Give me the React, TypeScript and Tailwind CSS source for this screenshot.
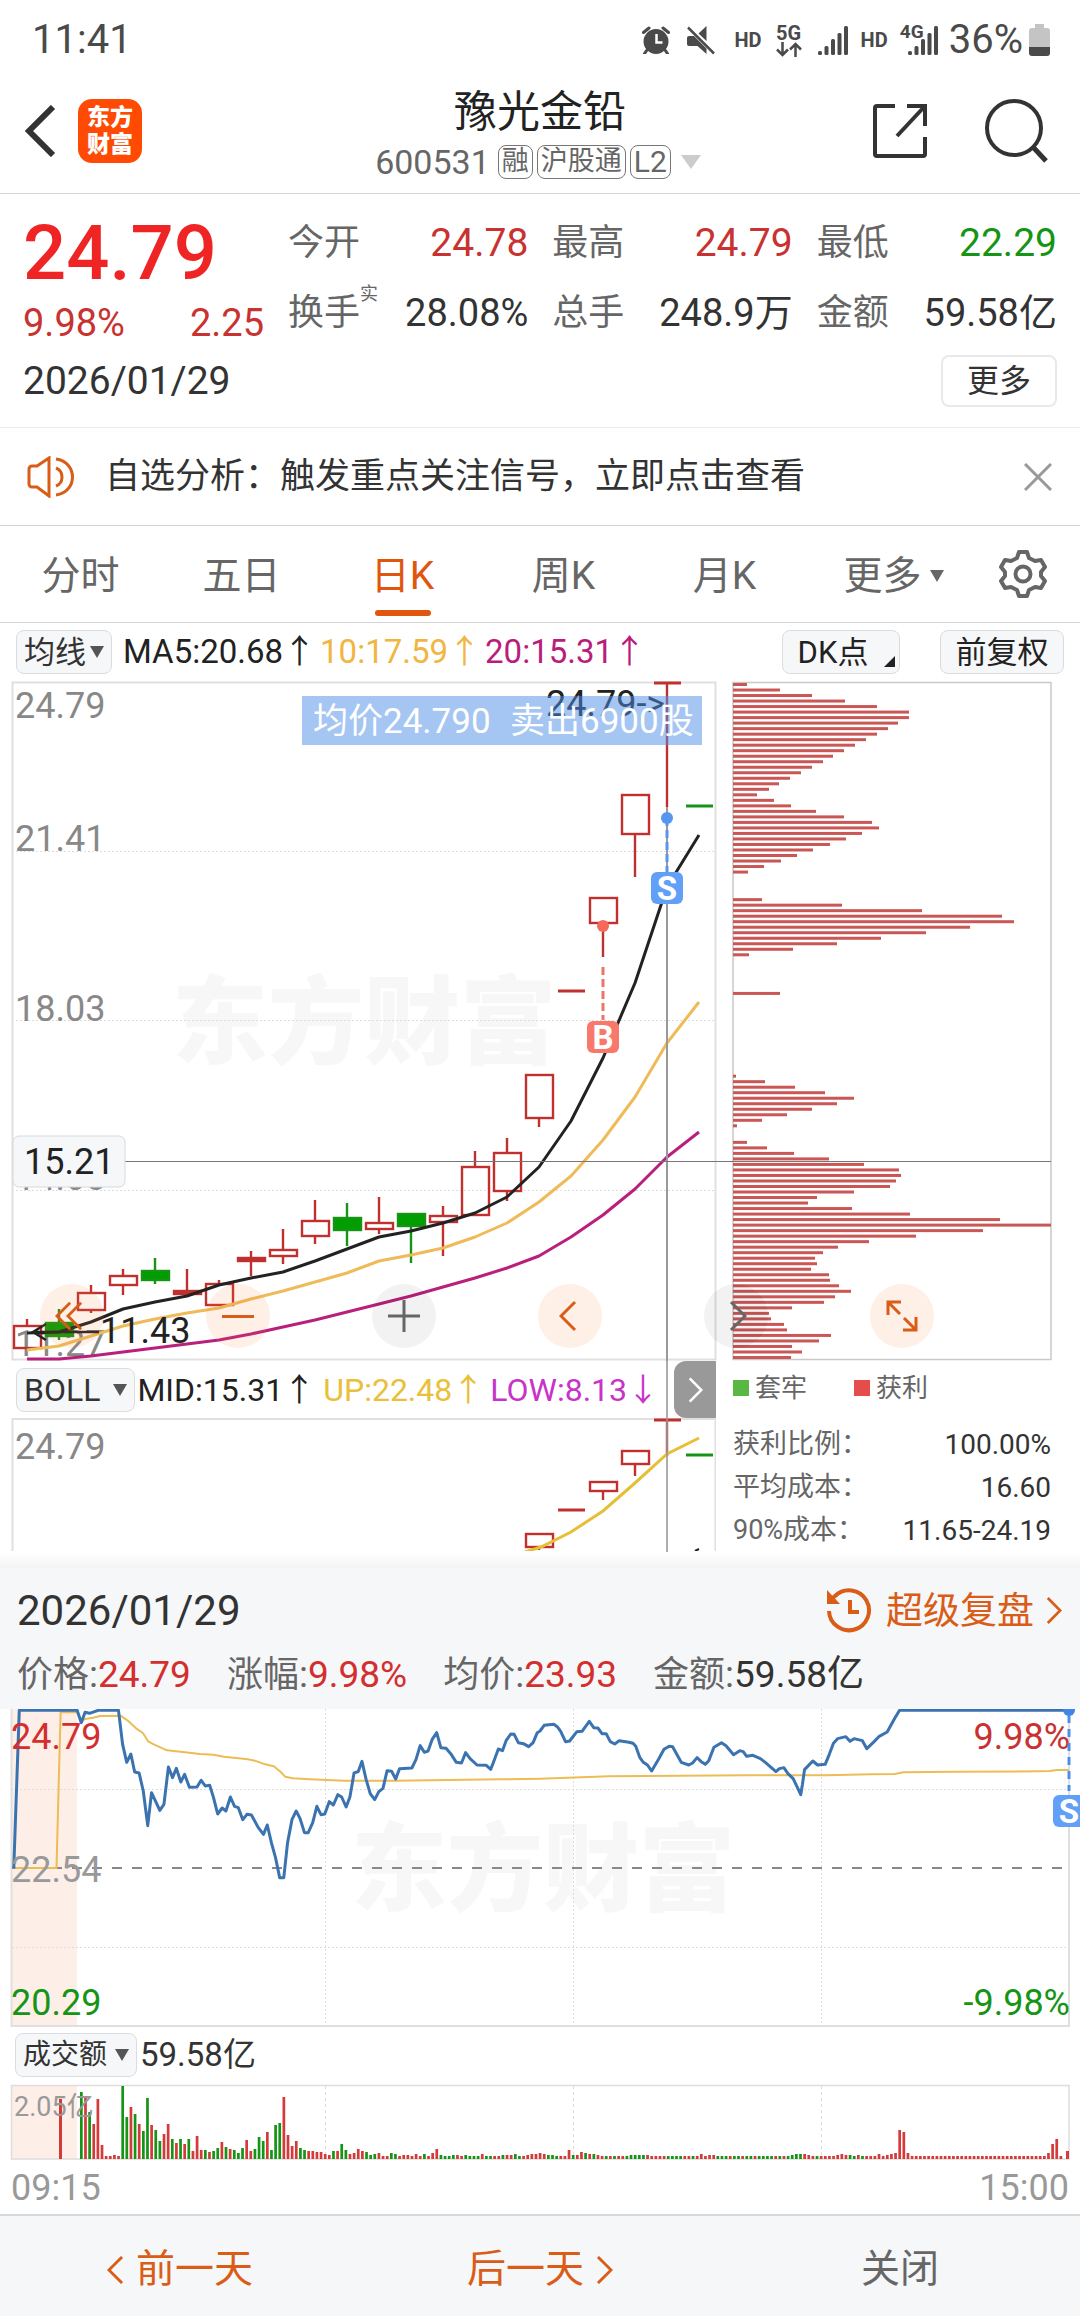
import React from "react";

const RED = "#c0302e";
const GREEN = "#159415";
const ORANGE = "#d95c17";

type Candle = { x: number; top: number; bottom: number; high: number; low: number; up: boolean };

const c = (x: number, top: number, bottom: number, high: number, low: number, up = true): Candle => ({
  x, top, bottom, high, low, up,
});

const candles: Candle[] = [
  c(27, 1326, 1348, 1319, 1348),
  c(59, 1323, 1336, 1309, 1340, false),
  c(91, 1293, 1310, 1285, 1313),
  c(123, 1276, 1285, 1269, 1295),
  c(155, 1271, 1280, 1258, 1284, false),
  c(187, 1291, 1294, 1269, 1294),
  c(219, 1284, 1305, 1280, 1305),
  c(251, 1258, 1261, 1251, 1276),
  c(283, 1250, 1256, 1229, 1264),
  c(315, 1221, 1236, 1200, 1244),
  c(347, 1218, 1230, 1203, 1246, false),
  c(379, 1223, 1229, 1197, 1234),
  c(411, 1214, 1226, 1214, 1263, false),
  c(443, 1216, 1222, 1206, 1256),
  c(475, 1167, 1215, 1151, 1215),
  c(507, 1153, 1191, 1138, 1201),
  c(539, 1075, 1118, 1075, 1127),
  c(571, 991, 991, 991, 991),
  c(603, 898, 923, 898, 957),
  c(635, 795, 834, 795, 877),
  c(667, 683, 683, 683, 807),
  c(699, 806, 806, 806, 806, false),
];

const subCandles: Candle[] = [
  c(539, 1534, 1547, 1534, 1550),
  c(571, 1510, 1510, 1510, 1510),
  c(603, 1482, 1491, 1482, 1500),
  c(635, 1451, 1464, 1451, 1476),
  c(667, 1420, 1420, 1420, 1456),
  c(699, 1455, 1455, 1455, 1455, false),
];

const line = (ys: number[]) => ys.map((y, i) => `${27 + i * 32},${y}`).join(" ");

const ma5 = line([1333, 1332, 1322, 1309, 1302, 1296, 1285, 1278, 1272, 1261, 1249, 1237, 1231, 1223, 1213, 1197, 1167, 1121, 1058, 983, 887, 835]);
const ma10 = line([1350, 1346, 1336, 1326, 1319, 1313, 1308, 1299, 1291, 1282, 1273, 1261, 1255, 1248, 1237, 1223, 1202, 1176, 1140, 1097, 1043, 1002]);
const ma20 = line([1359, 1359, 1356, 1352, 1348, 1344, 1340, 1334, 1327, 1320, 1312, 1304, 1296, 1287, 1278, 1268, 1256, 1237, 1215, 1189, 1157, 1132]);

/* Runs of the cost distribution: first row of the run, then one length per price step. */
const costRuns: [number, number[]][] = [
  [0, [14, 47, 79, 112, 144, 176, 176, 165, 155, 144, 133, 122, 111, 100, 90, 79, 68, 57, 46, 36, 24, 41, 58, 83, 111, 139, 146, 129, 113, 97, 80, 64, 48, 31, 15]],
  [39, [29, 109, 189, 269, 281, 237, 193, 148, 104, 60, 16]],
  [56, [47]],
  [71, [3, 32, 62, 92, 121, 104, 79, 54, 29, 4]],
  [83, [14, 34, 61, 96, 131, 166, 168, 163, 157, 121, 84, 75, 119, 177, 267, 318, 250, 183, 136, 105, 90, 82, 84, 78, 96, 97, 106, 118, 102, 91, 59, 36, 38, 51, 54, 98, 86, 59, 69, 58]],
];

const pricePath =
  "40,531 56,58 224,58 236,95 247,64 260,67 285,58 344,58 356,160 368,214 380,189 391,243 404,246 416,300 429,404 440,305 464,358 476,340 489,228 501,260 512,232 525,273 536,250 550,289 572,288 584,268 596,285 609,283 620,320 632,369 645,351 656,360 669,318 681,346 692,350 705,386 717,370 730,372 750,410 765,430 776,402 788,455 800,500 812,560 824,560 835,455 848,385 860,360 871,382 884,425 895,425 908,395 920,346 932,371 943,369 956,332 968,342 981,311 992,318 1005,348 1016,318 1028,246 1040,242 1051,211 1063,265 1075,308 1088,326 1100,302 1112,292 1124,239 1137,241 1149,264 1160,233 1196,231 1208,205 1220,164 1232,184 1243,180 1255,145 1268,125 1280,170 1295,172 1310,190 1325,214 1340,216 1352,185 1365,203 1385,222 1412,223 1425,235 1435,208 1447,174 1459,179 1470,148 1483,129 1493,130 1505,155 1520,158 1535,167 1548,155 1560,125 1568,120 1580,103 1608,100 1618,107 1628,121 1642,152 1654,150 1675,122 1690,121 1711,91 1724,110 1736,111 1748,128 1760,128 1772,152 1785,159 1798,149 1826,154 1838,157 1846,166 1858,200 1868,214 1880,222 1892,240 1913,203 1928,175 1943,166 1953,167 1978,214 2000,222 2011,216 2024,200 2036,212 2048,220 2058,209 2073,169 2095,155 2108,164 2130,191 2148,179 2158,182 2168,196 2186,193 2208,203 2223,215 2253,242 2263,233 2276,230 2288,248 2303,263 2318,295 2325,311 2330,280 2336,236 2360,210 2374,222 2396,220 2408,190 2420,157 2432,143 2456,137 2468,151 2480,143 2504,149 2517,173 2538,152 2553,136 2576,123 2598,82 2612,58 3104,58";
const averagePath =
  "45,531 164,531 176,64 224,64 236,90 247,84 270,80 290,75 350,74 370,88 395,112 415,126 430,151 448,161 485,178 550,185 580,189 620,191 650,197 720,205 740,209 770,220 795,226 812,240 828,257 850,262 900,265 1000,269 1150,269 1350,266 1450,265 1568,263 1768,256 1968,254 2168,253 2398,253 2528,250 2598,249 2623,244 2768,242 3008,241 3048,240 3068,237 3104,237";

/* One letter and height per minute: r = rise, g = fall. */
const volumeHead =
  "g67 r62 g47 r35 r60 r14 r3 r3 r4 r3 g73 g42 r52 g45 r35 g28 g61 r34 g29 g18 r25 r35 g20 r16 g20 r15 g20 r8 r23 r9 g9 r7 g8 g11 r17 g12 r10 g9 g6 g11 r19 r8 g10 g22 g18 r27 g9 g34 g36 r62 r24 r13 r18 g11 g9 r8 r8 r7 r7 r5 r4 g8 r8 g15 g9 r5 r6 r10 r8 g7 g4 g5 r6 r3 r3 g6 g5 r3 r4 r4 r3 r5 r3 g5 r3 r6 r10 g4 g3 g3 g4 r4 r3 g4 g3 g3 g3 r5 g3 g3 r3 r3 g4 r4 r4 g5 g3 r3 r4 r5 r5 r6 r5 g4 g4 g3 r3 r3 r9 g4 r4 r7 g6 r5 g5 r4 r3 g3 r3 g3 r3 r3 g3 g4 g4 g4 g4 r4 r3 r3 r3 r3 g3 g3 g3 g3 r3 r3 g3 r3 r5 r3 r4 r4 g3 g3 g3 r3 g3 g3 r3 g3 g3 r3 g3 g3 g3 g3 r3 g3 r3 g3 g4 g5 g5 r5 r4 r3 g3 r3 r3 r3 r3 r4 r5 r4 g4 g3 r4 g3 r3 r3 r3 r5 r3 r4 r5 r6 r29 r27 r6".split(" ");
const volumeTail = [...Array(33).fill("r3"), "r6", "r15", "r20", "r3"] as string[];
const volumes = [...volumeHead, ...volumeTail];

function Candles({ items }: { items: Candle[] }) {
  return (
    <g strokeWidth={2.4}>
      {items.map((k) => {
        const color = k.up ? RED : GREEN;
        const flat = k.bottom - k.top < 1;
        const filled = !k.up || k.bottom - k.top < 5;
        return (
          <g key={k.x} stroke={color} fill={filled ? (k.up ? RED : "#009e00") : "none"}>
            <line x1={k.x} x2={k.x} y1={k.high} y2={k.top} />
            <line x1={k.x} x2={k.x} y1={k.bottom} y2={k.low} />
            {flat ? (
              <line x1={k.x - 13} x2={k.x + 14} y1={k.top} y2={k.top} strokeWidth={3} />
            ) : (
              <rect x={k.x - 13} y={k.top} width={27} height={k.bottom - k.top} />
            )}
          </g>
        );
      })}
    </g>
  );
}

function Badge({ x, y, letter, color }: { x: number; y: number; letter: string; color: string }) {
  return (
    <g>
      <rect x={x - 16} y={y} width={32} height={32} rx={6} fill={color} />
      <text x={x} y={y + 28} textAnchor="middle" fontSize={33} fontWeight={700} fill="#fff">{letter}</text>
    </g>
  );
}

function Chevron({ dir, className }: { dir: "left" | "right"; className: string }) {
  return (
    <svg viewBox="0 0 18 30" className={className} fill="none" stroke="currentColor" strokeWidth={3}>
      <path d={dir === "left" ? "M16 1 2 15l14 14" : "M2 1l14 14L2 29"} />
    </svg>
  );
}

function Signal() {
  return (
    <svg viewBox="0 0 30 29" className="h-[29px] w-[30px]" fill="#4a4a4a">
      <rect x="0" y="25" width="4" height="4" rx="1.5" />
      <rect x="6.5" y="20" width="4" height="9" rx="1.5" />
      <rect x="13" y="13" width="4" height="16" rx="1.5" />
      <rect x="19.5" y="7" width="4" height="22" rx="1.5" />
      <rect x="26" y="0" width="4" height="29" rx="1.5" />
    </svg>
  );
}

function StatusBar() {
  return (
    <div className="flex h-[78px] items-center justify-between pl-8 pr-[30px] pt-0.5 text-[#4a4a4a]">
      <span className="text-[40px] leading-none">11:41</span>
      <div className="flex items-center">
        <svg viewBox="0 0 28 28" className="mr-4 size-7" fill="none" stroke="#4a4a4a">
          <circle cx="14" cy="15.5" r="12.5" fill="#4a4a4a" stroke="none" />
          <path d="M1.5 6.5 7 2M26.5 6.5 21 2M5 24l-2.5 3.5M23 24l2.5 3.5" strokeWidth="3" strokeLinecap="round" />
          <path d="M14.5 8v8.5h6" stroke="#fff" strokeWidth="2.5" />
        </svg>
        <svg viewBox="0 0 30 29" className="mr-[18px] h-[29px] w-[30px]" fill="#4a4a4a">
          <path d="M1 12a2 2 0 0 1 2-2h5l12.5 12.5V28l-9-8H3a2 2 0 0 1-2-2zM12.5 7.5 20.5 0v15z" />
          <path d="M2 1.5 28 27.5" stroke="#4a4a4a" strokeWidth="2.5" />
        </svg>
        <span className="mr-[14px] text-[20px] font-bold leading-none">HD</span>
        <span className="mr-4 flex flex-col items-center">
          <span className="text-[20px] font-bold leading-[18px]">5G</span>
          <svg viewBox="0 0 26 15" className="h-[15px] w-[26px]" fill="none" stroke="#4a4a4a" strokeWidth="2.5">
            <path d="M6.5 0v13M1 7.5l5.5 5.5L12 7.5M19.5 15V2M14 7.5 19.5 2 25 7.5" />
          </svg>
        </span>
        <Signal />
        <span className="ml-[13px] mr-3 text-[20px] font-bold leading-none">HD</span>
        <span className="relative pl-2">
          <Signal />
          <span className="absolute -top-1 left-0 text-[19px] font-bold leading-none">4G</span>
        </span>
        <span className="ml-[11px] mr-[6px] text-[40px] leading-none">36%</span>
        <svg viewBox="0 0 21 32" className="h-8 w-[21px]">
          <path d="M6 0h9v4h3a3 3 0 0 1 3 3v17H0V7a3 3 0 0 1 3-3h3z" fill="#c4c4c4" />
          <path d="M0 23h21v6a3 3 0 0 1-3 3H3a3 3 0 0 1-3-3z" fill="#4a4a4a" />
        </svg>
      </div>
    </div>
  );
}

function Tag({ children }: { children: React.ReactNode }) {
  return (
    <span className="flex h-[34px] items-center rounded-lg border border-[#777] px-[3px] text-[27px] leading-none">{children}</span>
  );
}

function Header() {
  return (
    <header className="grid h-[116px] grid-cols-[1fr_auto_1fr] items-center border-b border-[#d4d4d4] pb-2.5">
      <div className="flex items-center gap-[22px] pl-[25px]">
        <button aria-label="返回">
          <svg viewBox="0 0 31 52" className="h-[52px] w-[31px]" fill="none" stroke="#333" strokeWidth="6">
            <path d="M28 2 4 26l24 24" />
          </svg>
        </button>
        <span className="flex size-16 flex-col items-center justify-center rounded-[14px] bg-[#fe4a03] text-[23px] font-black leading-[27px] text-white">
          <span>东方</span>
          <span>财富</span>
        </span>
      </div>
      <div className="flex flex-col items-center pt-1 text-[#666]">
        <h1 className="text-[43px] leading-[50px] text-[#222]">豫光金铅</h1>
        <button className="mt-2 flex items-center gap-1 pr-1">
          <span className="mr-1 text-[34px] leading-none">600531</span>
          <Tag>融</Tag>
          <Tag>沪股通</Tag>
          <Tag><span className="text-[30px]">L2</span></Tag>
          <svg viewBox="0 0 20 14" className="ml-1.5 h-[14px] w-5" fill="#ccc"><path d="M0 0h20L10 14z" /></svg>
        </button>
      </div>
      <div className="flex items-center justify-end gap-[57px] pr-[31px]">
        <button aria-label="分享">
          <svg viewBox="0 0 56 56" className="size-14" fill="none" stroke="#333" strokeWidth="4">
            <path d="M23 3H5a2 2 0 0 0-2 2v46a2 2 0 0 0 2 2h46a2 2 0 0 0 2-2V34M35 3h18v20M53 3 25 33" />
          </svg>
        </button>
        <button aria-label="搜索">
          <svg viewBox="0 0 64 64" className="size-16" fill="none" stroke="#333" strokeWidth="4">
            <circle cx="29" cy="29" r="27" />
            <path d="M48 48 61 62" strokeWidth="5" />
          </svg>
        </button>
      </div>
    </header>
  );
}

const quotes: [string, string, string, string, string, string][] = [
  ["今开", "24.78", "text-[#c83230]", "换手", "28.08%", "实"],
  ["最高", "24.79", "text-[#c83230]", "总手", "248.9万", ""],
  ["最低", "22.29", "text-[#159415]", "金额", "59.58亿", ""],
];

function Quote() {
  return (
    <section className="border-b border-[#ebebeb] px-[23px] pb-5 pt-[14px] text-[39px]">
      <div className="grid grid-cols-[241px_1fr_1fr_1fr] gap-6">
        <div className="pt-1 text-[#c83230]">
          <div className="text-[76px] font-medium leading-[82px] text-[#ef2424]">24.79</div>
          <div className="flex justify-between text-[38px] leading-[58px]">
            <span>9.98%</span>
            <span>2.25</span>
          </div>
        </div>
        {quotes.map(([a, av, color, b, bv, sup]) => (
          <dl key={a} className="leading-[70px] text-[#333]">
            <div className="flex h-[70px] justify-between">
              <dt className="text-[36px] text-[#666]">{a}</dt>
              <dd className={color}>{av}</dd>
            </div>
            <div className="flex h-[70px] justify-between">
              <dt className="relative text-[36px] text-[#666]">
                {b}
                {sup && <span className="absolute left-full top-1.5 text-[18px] leading-5">{sup}</span>}
              </dt>
              <dd className="text-[38px]">{bv}</dd>
            </div>
          </dl>
        ))}
      </div>
      <div className="mt-[3px] flex items-center justify-between text-[#333]">
        <span className="leading-[52px]">2026/01/29</span>
        <button className="h-[52px] rounded-lg border-2 border-[#e8e9ec] px-6 text-[32px] leading-none">更多</button>
      </div>
    </section>
  );
}

function Notice() {
  return (
    <div className="flex h-[98px] items-center border-b border-[#d4d4d4] pl-[27px] pr-7 text-[35px] text-[#333]">
      <svg viewBox="0 0 48 42" className="mr-[30px] h-[42px] w-12" fill="none" stroke={ORANGE} strokeWidth="3">
        <path d="M22 2 10 10H5a3 3 0 0 0-3 3v15a3 3 0 0 0 3 3h5l12 9zM29 3c22 3 22 33 0 36M29 12c8 3 8 15 0 18" />
      </svg>
      <span className="flex-1 pt-0.5">自选分析：触发重点关注信号，立即点击查看</span>
      <button aria-label="关闭提示">
        <svg viewBox="0 0 28 28" className="size-7" stroke="#999" strokeWidth="3"><path d="M1 1l26 26M27 1 1 27" /></svg>
      </button>
    </div>
  );
}

function Tabs() {
  return (
    <nav className="grid h-[97px] grid-cols-[repeat(6,161fr)_114fr] border-b border-[#d4d4d4] text-[39px] text-[#666]">
      {["分时", "五日", "日K", "周K", "月K"].map((t) => (
        <button key={t} className={t === "日K" ? "relative pt-1 text-[#e0560f]" : "relative pt-1"}>
          {t}
          {t === "日K" && <span className="absolute bottom-1.5 left-1/2 h-1.5 w-14 -translate-x-1/2 rounded-full bg-[#e0560f]" />}
        </button>
      ))}
      <button className="flex items-center justify-center gap-2 pl-4 pt-1">
        更多
        <svg viewBox="0 0 14 12" className="h-3 w-[14px]" fill="#666"><path d="M0 0h14L7 12z" /></svg>
      </button>
      <button aria-label="设置" className="flex items-center justify-center">
        <svg viewBox="0 0 48 48" className="size-12" fill="none" stroke="#666" strokeWidth="4" strokeLinejoin="round">
          <path d="M20 2h8l2 6 6 3 6-1 4 7-4 5v4l4 5-4 7-6-1-6 3-2 6h-8l-2-6-6-3-6 1-4-7 4-5v-4l-4-5 4-7 6 1 6-3z" />
          <circle cx="24" cy="24" r="7.5" />
        </svg>
      </button>
    </nav>
  );
}

function Drop({ children, className }: { children: React.ReactNode; className: string }) {
  return (
    <button className={`flex h-11 items-center rounded-lg border border-[#d9dde2] bg-[#f6f7f9] leading-none text-[#333] ${className}`}>
      {children}
      <svg viewBox="0 0 14 12" className="h-3 w-[14px]" fill="#555"><path d="M0 0h14L7 12z" /></svg>
    </button>
  );
}

function MaRow() {
  return (
    <div className="flex h-[58px] items-center pl-4 pr-4 text-[33px] text-[#222]">
      <Drop className="gap-1 px-[7px] text-[31px]">均线</Drop>
      <span className="ml-[11px]">MA5:20.68↑</span>
      <span className="ml-1 text-[#f1b541]">10:17.59↑</span>
      <span className="ml-1 flex-1 text-[#ba1c7c]">20:15.31↑</span>
      <button className="relative h-11 w-[118px] rounded-lg border border-[#d9dde2] bg-[#f6f7f9] pr-4 text-[31px] leading-none">
        DK点
        <svg viewBox="0 0 11 11" className="absolute bottom-1.5 right-1 size-[11px]" fill="#222"><path d="M11 0v11H0z" /></svg>
      </button>
      <button className="ml-10 h-11 w-[124px] rounded-lg border border-[#d9dde2] bg-[#f6f7f9] text-[31px] leading-none">前复权</button>
    </div>
  );
}

function KChart() {
  return (
    <div className="relative">
      <svg viewBox="0 681 1080 680" className="block h-auto w-full" fontSize={36}>
        <text x={364} y={1056} textAnchor="middle" fontSize={96} fontWeight={900} fill="#f7f7f7">东方财富</text>
        <g stroke="#ddd" strokeWidth={1} strokeDasharray="2 2">
          <line x1={12} x2={716} y1={851.5} y2={851.5} />
          <line x1={12} x2={716} y1={1020.5} y2={1020.5} />
          <line x1={12} x2={716} y1={1190.5} y2={1190.5} />
        </g>
        <rect x={12.5} y={682.5} width={703} height={677} fill="none" stroke="#e0e0e0" strokeWidth={2} />
        <g fill="#888">
          <text x={15} y={718}>24.79</text>
          <text x={15} y={851}>21.41</text>
          <text x={15} y={1021}>18.03</text>
          <text x={15} y={1190}>14.65</text>
          <text x={15} y={1356}>11.27</text>
        </g>
        <Candles items={candles} />
        <g fill="none" strokeWidth={3} strokeLinejoin="round">
          <polyline points={ma20} stroke="#b8207c" />
          <polyline points={ma10} stroke="#eebb58" />
          <polyline points={ma5} stroke="#222" />
        </g>
        <path d="M46 1324 33 1332l13 8M33 1332h66" fill="none" stroke="#222" strokeWidth={2.5} />
        <text x={100} y={1343} fill="#222">11.43</text>
        <text x={546} y={716} fill="#222">24.79-&gt;</text>
        <rect x={302} y={696} width={400} height={49} fill="#4b8ee5" fillOpacity={0.5} />
        <text x={313} y={733} fontSize={35} fill="#fff">均价24.790</text>
        <text x={510} y={733} fontSize={35} fill="#fff">卖出6900股</text>

        <circle cx={603} cy={926} r={6} fill="#f5695a" />
        <line x1={603} x2={603} y1={967} y2={1020} stroke="#ee7466" strokeWidth={3} strokeDasharray="8 4" />
        <Badge x={603} y={1021} letter="B" color="#f8796b" />
        <line x1={667} x2={667} y1={807} y2={1361} stroke="#999" strokeWidth={2} />
        <circle cx={667} cy={818} r={6} fill="#5796ec" />
        <line x1={667} x2={667} y1={818} y2={872} stroke="#5796ec" strokeWidth={3} strokeDasharray="8 4" />
        <Badge x={667} y={872} letter="S" color="#62a0f8" />

        <rect x={733} y={682.5} width={318} height={677} fill="#fff" stroke="#c9c9c9" strokeWidth={1.5} />
        <g fill="#c95755">
          {costRuns.flatMap(([start, widths]) =>
            widths.map((w, i) => (
              <rect key={start + i} x={733} y={683 + ((start + i) * 673) / 122} width={w} height={3} />
            )),
          )}
        </g>
        <line x1={125} x2={1051} y1={1161.5} y2={1161.5} stroke="#77757b" />
        <rect x={13} y={1136} width={112} height={51} rx={6} fill="#f6f7f9" stroke="#d5d9de" />
        <text x={24} y={1174} fill="#222">15.21</text>
      </svg>
      <div className="absolute bottom-[13px] left-10 right-0 flex gap-[102px] text-[#d95c17]">
        <button aria-label="最早" className="flex size-16 items-center justify-center rounded-full bg-[#fa7d3c]/12">
          <Chevron dir="left" className="h-[30px] w-[17px]" />
          <Chevron dir="left" className="-ml-1.5 mr-1.5 h-[30px] w-[17px]" />
        </button>
        <button aria-label="缩小" className="flex size-16 items-center justify-center rounded-full bg-[#fa7d3c]/12">
          <span className="h-[3px] w-8 bg-[#d95c17]" />
        </button>
        <button aria-label="放大" className="flex size-16 items-center justify-center rounded-full bg-black/5">
          <svg viewBox="0 0 32 32" className="size-8" stroke="#666" strokeWidth="3"><path d="M16 0v32M0 16h32" /></svg>
        </button>
        <button aria-label="左移" className="flex size-16 items-center justify-center rounded-full bg-[#fa7d3c]/12 pr-1">
          <Chevron dir="left" className="h-8 w-[18px]" />
        </button>
        <button aria-label="右移" className="flex size-16 items-center justify-center rounded-full bg-black/5 pl-1 text-[#666]">
          <Chevron dir="right" className="h-8 w-[18px]" />
        </button>
        <button aria-label="全屏" className="flex size-16 items-center justify-center rounded-full bg-[#fa7d3c]/12">
          <svg viewBox="0 0 32 32" className="size-8" fill="none" stroke="currentColor" strokeWidth="3">
            <path d="M2 15V2h13M2 2l12 12M30 17v13H17M30 30 18 18" />
          </svg>
        </button>
      </div>
    </div>
  );
}

function LowerCharts() {
  return (
    <div className="grid grid-cols-[716fr_364fr]">
      <div className="relative">
        <div className="flex h-[57px] items-center pl-4 text-[32px] text-[#222]">
          <Drop className="gap-[13px] px-[7px] text-[32px]">BOLL</Drop>
          <span className="ml-0.5">MID:15.31↑</span>
          <span className="ml-2 text-[#e9c03a]">UP:22.48↑</span>
          <span className="ml-1.5 flex-1 text-[#c833c8]">LOW:8.13↓</span>
          <button aria-label="更多指标" className="relative z-10 flex h-[57px] w-[42px] items-center justify-center rounded-l-xl bg-[#999] text-white">
            <Chevron dir="right" className="h-[26px] w-[15px]" />
          </button>
        </div>
        <svg viewBox="0 1418 716 133" className="block h-auto w-full">
          <path d="M12.5 1552V1419h703v133" fill="none" stroke="#e0e0e0" strokeWidth={2} />
          <text x={15} y={1459} fontSize={36} fill="#888">24.79</text>
          <Candles items={subCandles} />
          <polyline points="525,1552 541,1547 571,1532 603,1511 635,1483 667,1454 699,1438" fill="none" stroke="#e6bf35" strokeWidth={3} />
          <path d="M695 1551l4-2" stroke="#222" strokeWidth={2} />
        </svg>
        <span className="absolute inset-y-0 left-[93%] w-0.5 bg-[#999]/80" />
      </div>
      <div className="pl-[17px] pr-[29px] text-[28px] text-[#333]">
        <div className="flex h-[54px] items-center text-[26px] text-[#666]">
          <span className="mr-1.5 size-4 bg-[#5bb743]" />套牢
          <span className="ml-[47px] mr-1.5 size-4 bg-[#e64c4b]" />获利
        </div>
        <dl className="pt-2 leading-[43px]">
          {[["获利比例：", "100.00%"], ["平均成本：", "16.60"], ["90%成本：", "11.65-24.19"]].map(([k, v]) => (
            <div key={k} className="flex h-[43px] justify-between">
              <dt className="text-[27px] text-[#666]">{k}</dt>
              <dd>{v}</dd>
            </div>
          ))}
        </dl>
      </div>
    </div>
  );
}

const daily: [string, string, string][] = [
  ["价格", "24.79", "text-[#d42e2e]"],
  ["涨幅", "9.98%", "text-[#d42e2e]"],
  ["均价", "23.93", "text-[#d42e2e]"],
  ["金额", "59.58亿", "text-[#333]"],
];

function DayPanel() {
  return (
    <section>
      <div className="h-4 bg-gradient-to-b from-white to-[#f3f3f3]" />
      <div className="bg-[#f6f7f9] pb-1 pl-[17px] pr-[18px] pt-2">
        <div className="flex h-[68px] items-center justify-between">
          <span className="text-[42px] text-[#333]">2026/01/29</span>
          <button className="flex items-center text-[37px] text-[#d95c17]">
            <svg viewBox="0 0 46 46" className="mr-[14px] size-[46px]" fill="none" stroke="currentColor" strokeWidth="4">
              <path d="M3 24a20 20 0 1 0 6-15L3 14M24 13v12h9" />
              <path d="M1 3v14h13z" fill="currentColor" stroke="none" />
            </svg>
            <span className="pt-1">超级复盘</span>
            <Chevron dir="right" className="ml-3 h-[27px] w-4" />
          </button>
        </div>
        <div className="flex h-[61px] items-center gap-[36px] text-[37px]">
          {daily.map(([k, v, color]) => (
            <span key={k} className="text-[#666]">
              <span className="text-[36px]">{k}</span>:<span className={color}>{v}</span>
            </span>
          ))}
        </div>
      </div>
      <svg viewBox="0 1708 1080 318" className="block h-auto w-full" fontSize={36}>
        <rect x={12} y={1708} width={65} height={317} fill="#fdeee8" />
        <text x={543} y={1902} textAnchor="middle" fontSize={96} fontWeight={900} fill="#f7f7f7">东方财富</text>
        <g stroke="#ddd" strokeDasharray="2 2">
          <path d="M12 1788.5h1057M12 1946.5h1057M325.5 1708v317M573.5 1708v317M821.5 1708v317" />
        </g>
        <path d="M11.5 1708v317h1057.5V1708" fill="none" stroke="#dfdfdf" strokeWidth={2} />
        <line x1={12} x2={1069} y1={1867} y2={1867} stroke="#888" strokeWidth={2} strokeDasharray="10 10" />
        <g transform="translate(0 1690) scale(.3444 .3333)" fill="none" strokeLinejoin="round">
          <polyline points={averagePath} stroke="#ecbc55" strokeWidth={2} vectorEffect="non-scaling-stroke" />
          <polyline points={pricePath} stroke="#3a73b0" strokeWidth={3} vectorEffect="non-scaling-stroke" />
        </g>
        <text x={11} y={1748} fill="#d42e2e">24.79</text>
        <text x={11} y={1881} fill="#999">22.54</text>
        <text x={11} y={2014} fill={GREEN}>20.29</text>
        <text x={1070} y={1748} textAnchor="end" fill="#c83230">9.98%</text>
        <text x={1070} y={2014} textAnchor="end" fill={GREEN}>-9.98%</text>
        <circle cx={1069} cy={1709} r={6} fill="#4285e8" />
        <line x1={1069} x2={1069} y1={1714} y2={1790} stroke="#4d8fe8" strokeWidth={3} strokeDasharray="8 6" />
        <Badge x={1069} y={1794} letter="S" color="#62a0f8" />
      </svg>
      <div className="flex h-14 items-center pl-[15px] text-[33px] text-[#333]">
        <Drop className="gap-2 px-[7px] text-[28px]">成交额</Drop>
        <span className="ml-[3px]">59.58亿</span>
      </div>
      <svg viewBox="0 2082 1080 78" className="block h-auto w-full">
        <rect x={12} y={2085} width={65} height={73} fill="#fdeee8" />
        <path d="M325.5 2085v73M573.5 2085v73M821.5 2085v73" stroke="#ddd" strokeDasharray="3 3" />
        <rect x={11.5} y={2084.5} width={1057.5} height={73.5} fill="none" stroke="#ddd" strokeWidth={1.5} />
        <rect x={59} y={2098} width={3} height={60} fill="#d33a39" />
        {volumes.map((v, i) => {
          const h = Number(v.slice(1));
          return <rect key={i} x={80 + i * 4.133} y={2158 - h} width={2.7} height={h} fill={v[0] === "r" ? "#d33a39" : GREEN} />;
        })}
        <rect x={1066} y={2150} width={3} height={8} fill="#d33a39" />
        <text x={14} y={2115} fontSize={27} fill="#999">2.05亿</text>
      </svg>
      <div className="flex h-[53px] items-center justify-between px-[11px] text-[36px] text-[#999]">
        <span>09:15</span>
        <span>15:00</span>
      </div>
    </section>
  );
}

function Footer() {
  return (
    <footer className="grid h-[103px] grid-cols-3 border-t-2 border-[#d6d8da] bg-[#f6f7f9] pt-1.5 text-[39px] text-[#d95c17]">
      <button className="flex items-center justify-center gap-3">
        <Chevron dir="left" className="h-7 w-[17px]" />
        前一天
      </button>
      <button className="flex items-center justify-center gap-3">
        后一天
        <Chevron dir="right" className="h-7 w-[17px]" />
      </button>
      <button className="text-[#666]">关闭</button>
    </footer>
  );
}

export default function App() {
  return (
    <main className="w-full overflow-hidden bg-white [font-family:Roboto,'Noto_Sans_CJK_SC',sans-serif]">
      <StatusBar />
      <Header />
      <Quote />
      <Notice />
      <Tabs />
      <MaRow />
      <KChart />
      <LowerCharts />
      <DayPanel />
      <Footer />
    </main>
  );
}
